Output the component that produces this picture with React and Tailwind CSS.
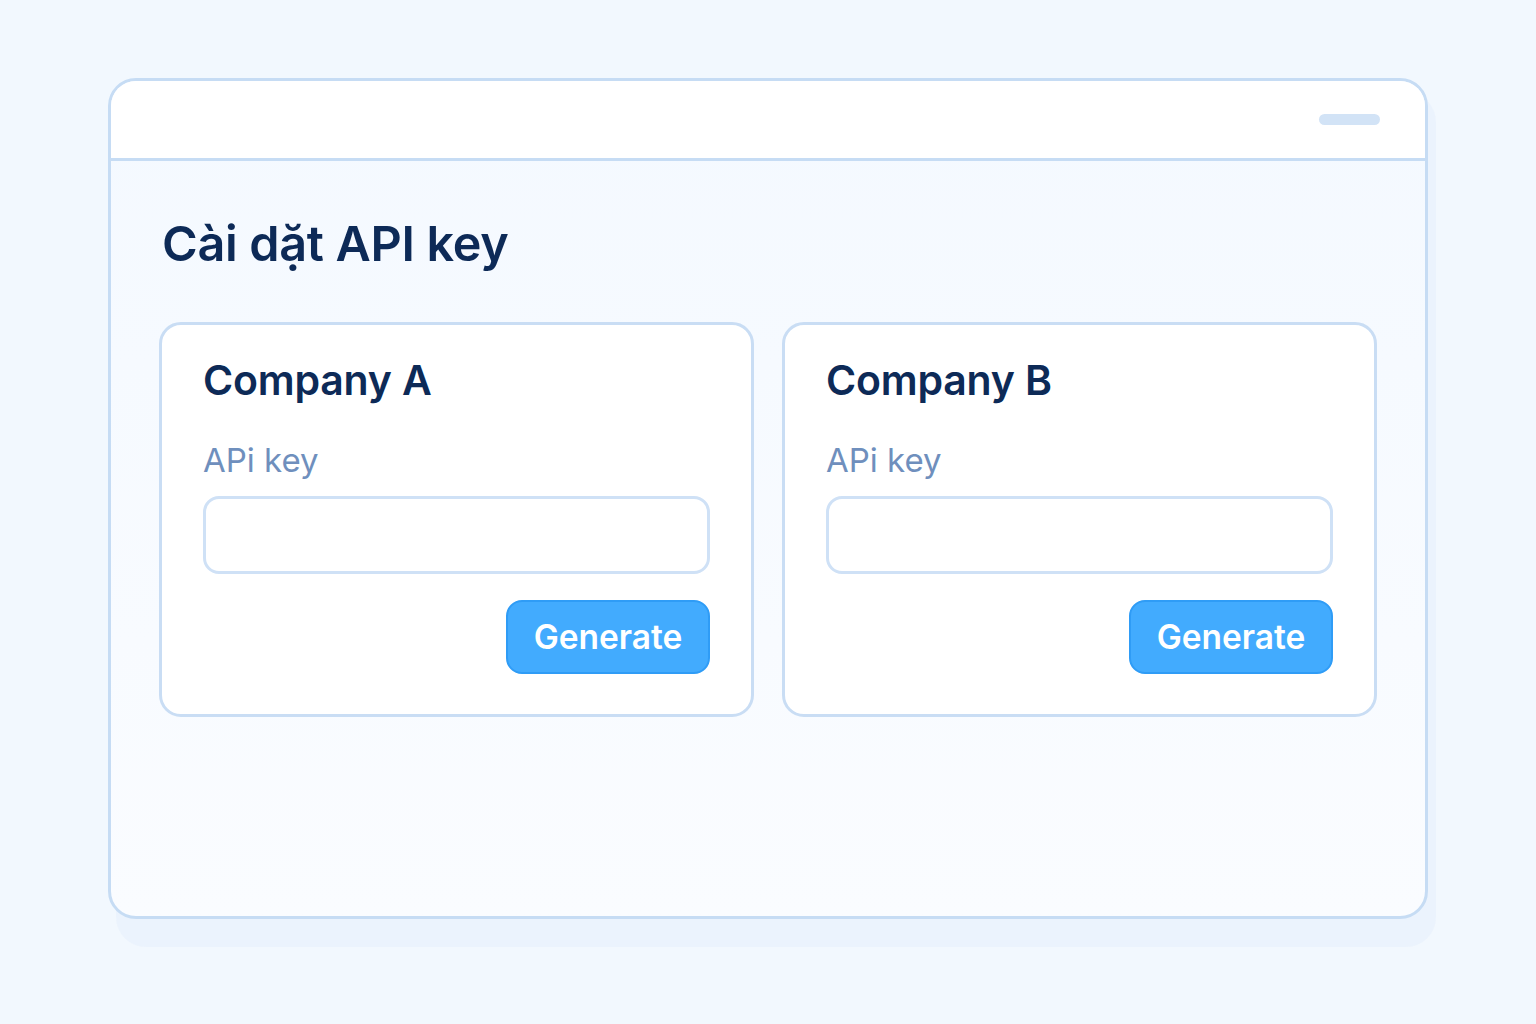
import React from "react";

function CompanyCard({ name }) {
  return (
    <div className="flex-1 rounded-[22px] border-[3px] border-[#c9ddf4] bg-white px-[41px] pt-[29px] pb-[40px]">
      <h2 className="text-[41px] leading-[52px] font-semibold text-[#0d2a57] tracking-[-0.2px]">{name}</h2>
      <div className="mt-[34px] text-[33px] leading-[40px] text-[#6f8fbd]">APi key</div>
      <div className="mt-[16px] h-[78px] rounded-[16px] border-[3px] border-[#cfe1f6] bg-white"></div>
      <div className="mt-[26px] flex justify-end">
        <button className="h-[74px] w-[204px] rounded-[16px] border-2 border-[#2f9cf6] bg-[#42abfe] text-[33.5px] font-semibold text-white">
          Generate
        </button>
      </div>
    </div>
  );
}

export default function App() {
  return (
    <div
      className="min-h-[1024px] w-[1536px] bg-[#f2f8fe] pl-[108px] pt-[78px]"
      style={{ fontFamily: "Inter, 'Noto Sans', sans-serif" }}
    >
      <div className="relative w-[1320px] h-[841px]">
        <div className="absolute left-[8px] top-[14px] w-[1320px] h-[855px] rounded-[30px] bg-[#e8f1fc] opacity-70"></div>
        <div className="relative flex h-[841px] w-[1320px] flex-col overflow-hidden rounded-[28px] border-[3px] border-[#c6dcf4] bg-gradient-to-b from-[#f4f9ff] to-[#fafcff]">
          <div className="flex h-[80px] shrink-0 items-center justify-end border-b-[3px] border-[#c6dcf4] bg-white pr-[45px]">
            <div className="h-[11px] w-[61px] rounded-full bg-[#d2e3f6]"></div>
          </div>
          <div className="px-[48px] pt-[55px]">
            <h1 className="text-[48.5px] leading-[56px] font-semibold text-[#0d2a57] tracking-[-0.3px] pl-[3px]">Cài dặt API key</h1>
            <div className="mt-[50px] flex gap-[28px]">
              <CompanyCard name="Company A" />
              <CompanyCard name="Company B" />
            </div>
          </div>
        </div>
      </div>
    </div>
  );
}
